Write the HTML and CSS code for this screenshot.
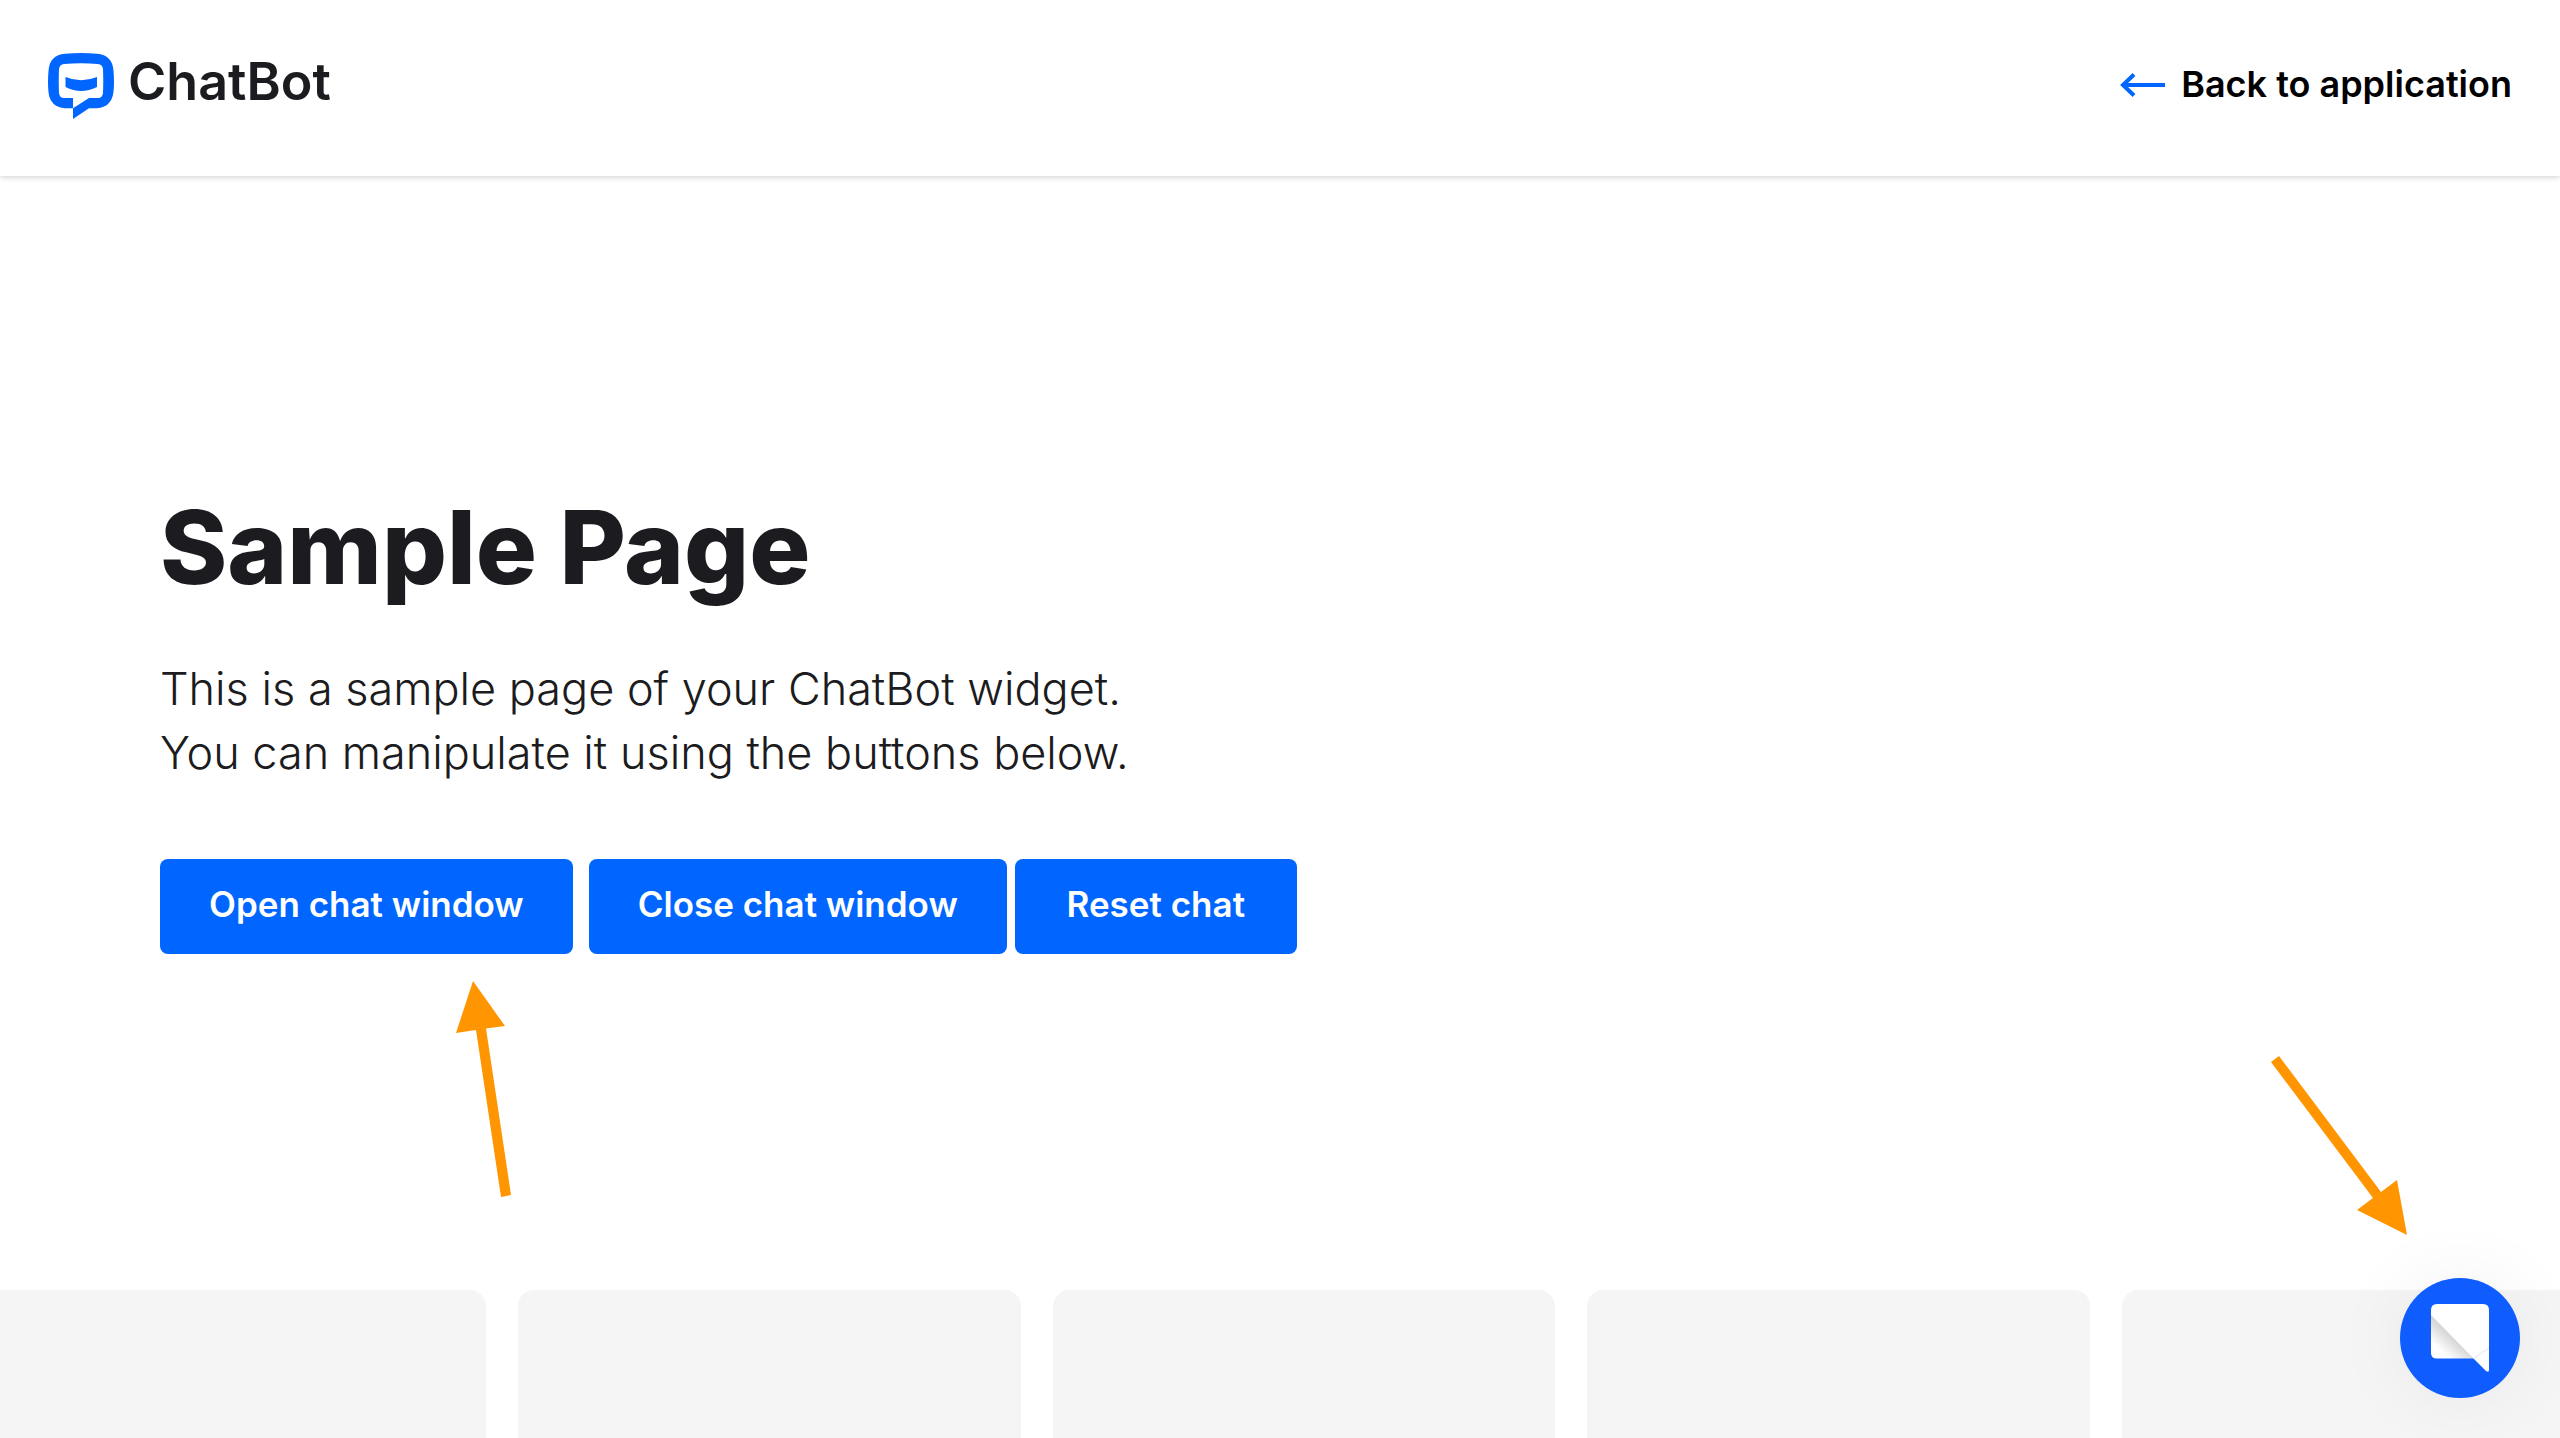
FILE: index.html
```html
<!DOCTYPE html>
<html lang="en">
<head>
  <meta charset="utf-8">
  <meta name="viewport" content="width=device-width, initial-scale=1">
  <title>Sample Page</title>
  <link rel="stylesheet" href="styles.css">
</head>
<body>
  <header class="header">
    <a class="logo" href="#">
      <svg class="logo-mark" viewBox="0 0 66 66" aria-hidden="true">
        <path fill="#0066ff" fill-rule="evenodd" d="M17 .8Q33-.8 49 .8Q64.500 2 65.500 18Q66.500 29 65.500 39Q63.500 54 49 55.300H41L25 66V45H16Q11.500 45 11 40Q10.500 28 11 16Q11.500 11.500 16 11Q33 9.500 50 11Q54.500 11.500 55 16Q55.500 28 55 40Q54.500 45 50 45H41L25 55.300H17Q2 54 .5 39Q-.5 29 .5 18Q1.500 2 17 .8Z"/>
        <path fill="#0066ff" d="M17.500 24Q33 30.500 49 24V34Q33 42 17.500 34Z"/>
      </svg>
      <span class="logo-name">ChatBot</span>
    </a>
    <a class="back" href="#">
      <svg class="back-arrow" viewBox="0 0 46 26" aria-hidden="true">
        <path fill="none" stroke="#0066ff" stroke-width="4" d="M46 14H4M15 3.500 4 14 15 24.500"/>
      </svg>
      <span>Back to application</span>
    </a>
  </header>

  <main class="hero">
    <h1 class="title">Sample Page</h1>
    <p class="lead">This is a sample page of your ChatBot widget.<br>You can manipulate it using the buttons below.</p>
    <div class="actions">
      <div class="toggle">
        <button class="button" type="button">Open chat window</button>
        <button class="button" type="button">Close chat window</button>
      </div>
      <button class="button" type="button">Reset chat</button>
    </div>
  </main>

  <div class="cards">
    <div class="card"></div>
    <div class="card"></div>
    <div class="card"></div>
    <div class="card"></div>
    <div class="card"></div>
  </div>

  <svg class="pointer pointer-open" viewBox="0 0 55 217" aria-hidden="true">
    <path fill="#ff9500" d="M17 0 49 45 30 47.500 55 214 45 216 20 49 0 52Z"/>
  </svg>
  <svg class="pointer pointer-chat" viewBox="0 0 136 179" aria-hidden="true">
    <path fill="#ff9500" d="M8 0 110 136 126 124 136 179 86 154 102 142 0 6Z"/>
  </svg>

  <button class="chat-button" type="button" aria-label="Open chat">
    <svg class="chat-icon" viewBox="0 0 58 68" aria-hidden="true">
      <defs>
        <linearGradient id="fold" gradientUnits="userSpaceOnUse" x1="21" y1="33" x2="9" y2="46">
          <stop offset="0" stop-color="#d6d6d6"/>
          <stop offset="1" stop-color="#fff"/>
        </linearGradient>
      </defs>
      <path fill="url(#fold)" d="M0 9V49Q0 54.500 6 54.500H43Z"/>
      <path fill="#fff" d="M0 11V6Q0 0 6 0H52Q58 0 58 6V66Q58 69 55 67L42 54Z"/>
      <path fill="none" stroke="#dfe6fb" stroke-width="1" d="M43 54 58 44"/>
    </svg>
  </button>
</body>
</html>
```
FILE: styles.css
```css
* {
  box-sizing: border-box;
}

body {
  position: relative;
  display: flex;
  flex-direction: column;
  min-height: 100vh;
  margin: 0;
  overflow-x: hidden;
  background: #fff;
  color: #1b1b20;
  font-family: "Inter", "Liberation Sans", sans-serif;
}

.header {
  display: flex;
  align-items: flex-start;
  justify-content: space-between;
  height: 176px;
  padding: 48px;
  box-shadow: 0 1px 6px rgba(0, 0, 0, 0.2);
}

.logo,
.back {
  display: flex;
  align-items: center;
  color: inherit;
  text-decoration: none;
}

.logo {
  gap: 14px;
  padding-top: 5px;
}

.logo-mark {
  width: 66px;
  height: 66px;
}

.logo-name {
  padding-bottom: 8px;
  font-size: 52px;
  font-weight: 600;
  line-height: 56px;
}

.back {
  gap: 16px;
  padding-top: 12px;
  color: #000;
  font-size: 36px;
  font-weight: 600;
  line-height: 48px;
}

.back-arrow {
  width: 46px;
  height: 26px;
}

.hero {
  padding: 315px 160px 336px;
}

.title {
  margin: 0 0 54px;
  font-size: 102px;
  font-weight: 800;
  line-height: 112px;
}

.lead {
  margin: 0 0 74px;
  font-size: 45px;
  font-weight: 300;
  line-height: 64px;
}

.actions {
  display: flex;
  gap: 8px;
}

.toggle {
  display: flex;
  gap: 16px;
}

.button {
  min-width: 282px;
  padding: 21px 49px 26px;
  border: 0;
  border-radius: 8px;
  background: #0066ff;
  color: #fff;
  font: 600 35px/48px "Inter", "Liberation Sans", sans-serif;
}

.cards {
  display: grid;
  flex: 1;
  grid-template-columns: repeat(5, 1fr);
  gap: 32px;
  margin: 0 -64px 0 -16px;
}

.card {
  min-height: 148px;
  border-radius: 16px 16px 0 0;
  background: #f5f5f5;
}

.pointer {
  position: absolute;
}

.pointer-open {
  top: 981px;
  left: 456px;
  width: 55px;
  height: 217px;
}

.pointer-chat {
  top: 1056px;
  right: 153px;
  width: 136px;
  height: 179px;
}

.chat-button {
  position: fixed;
  right: 40px;
  bottom: 40px;
  display: flex;
  justify-content: center;
  width: 120px;
  height: 120px;
  padding: 26px 0 0;
  border: 0;
  border-radius: 50%;
  background: #0f5cff;
  box-shadow: 0 0 80px rgba(0, 0, 0, 0.06);
}

.chat-icon {
  width: 58px;
  height: 68px;
}
```
